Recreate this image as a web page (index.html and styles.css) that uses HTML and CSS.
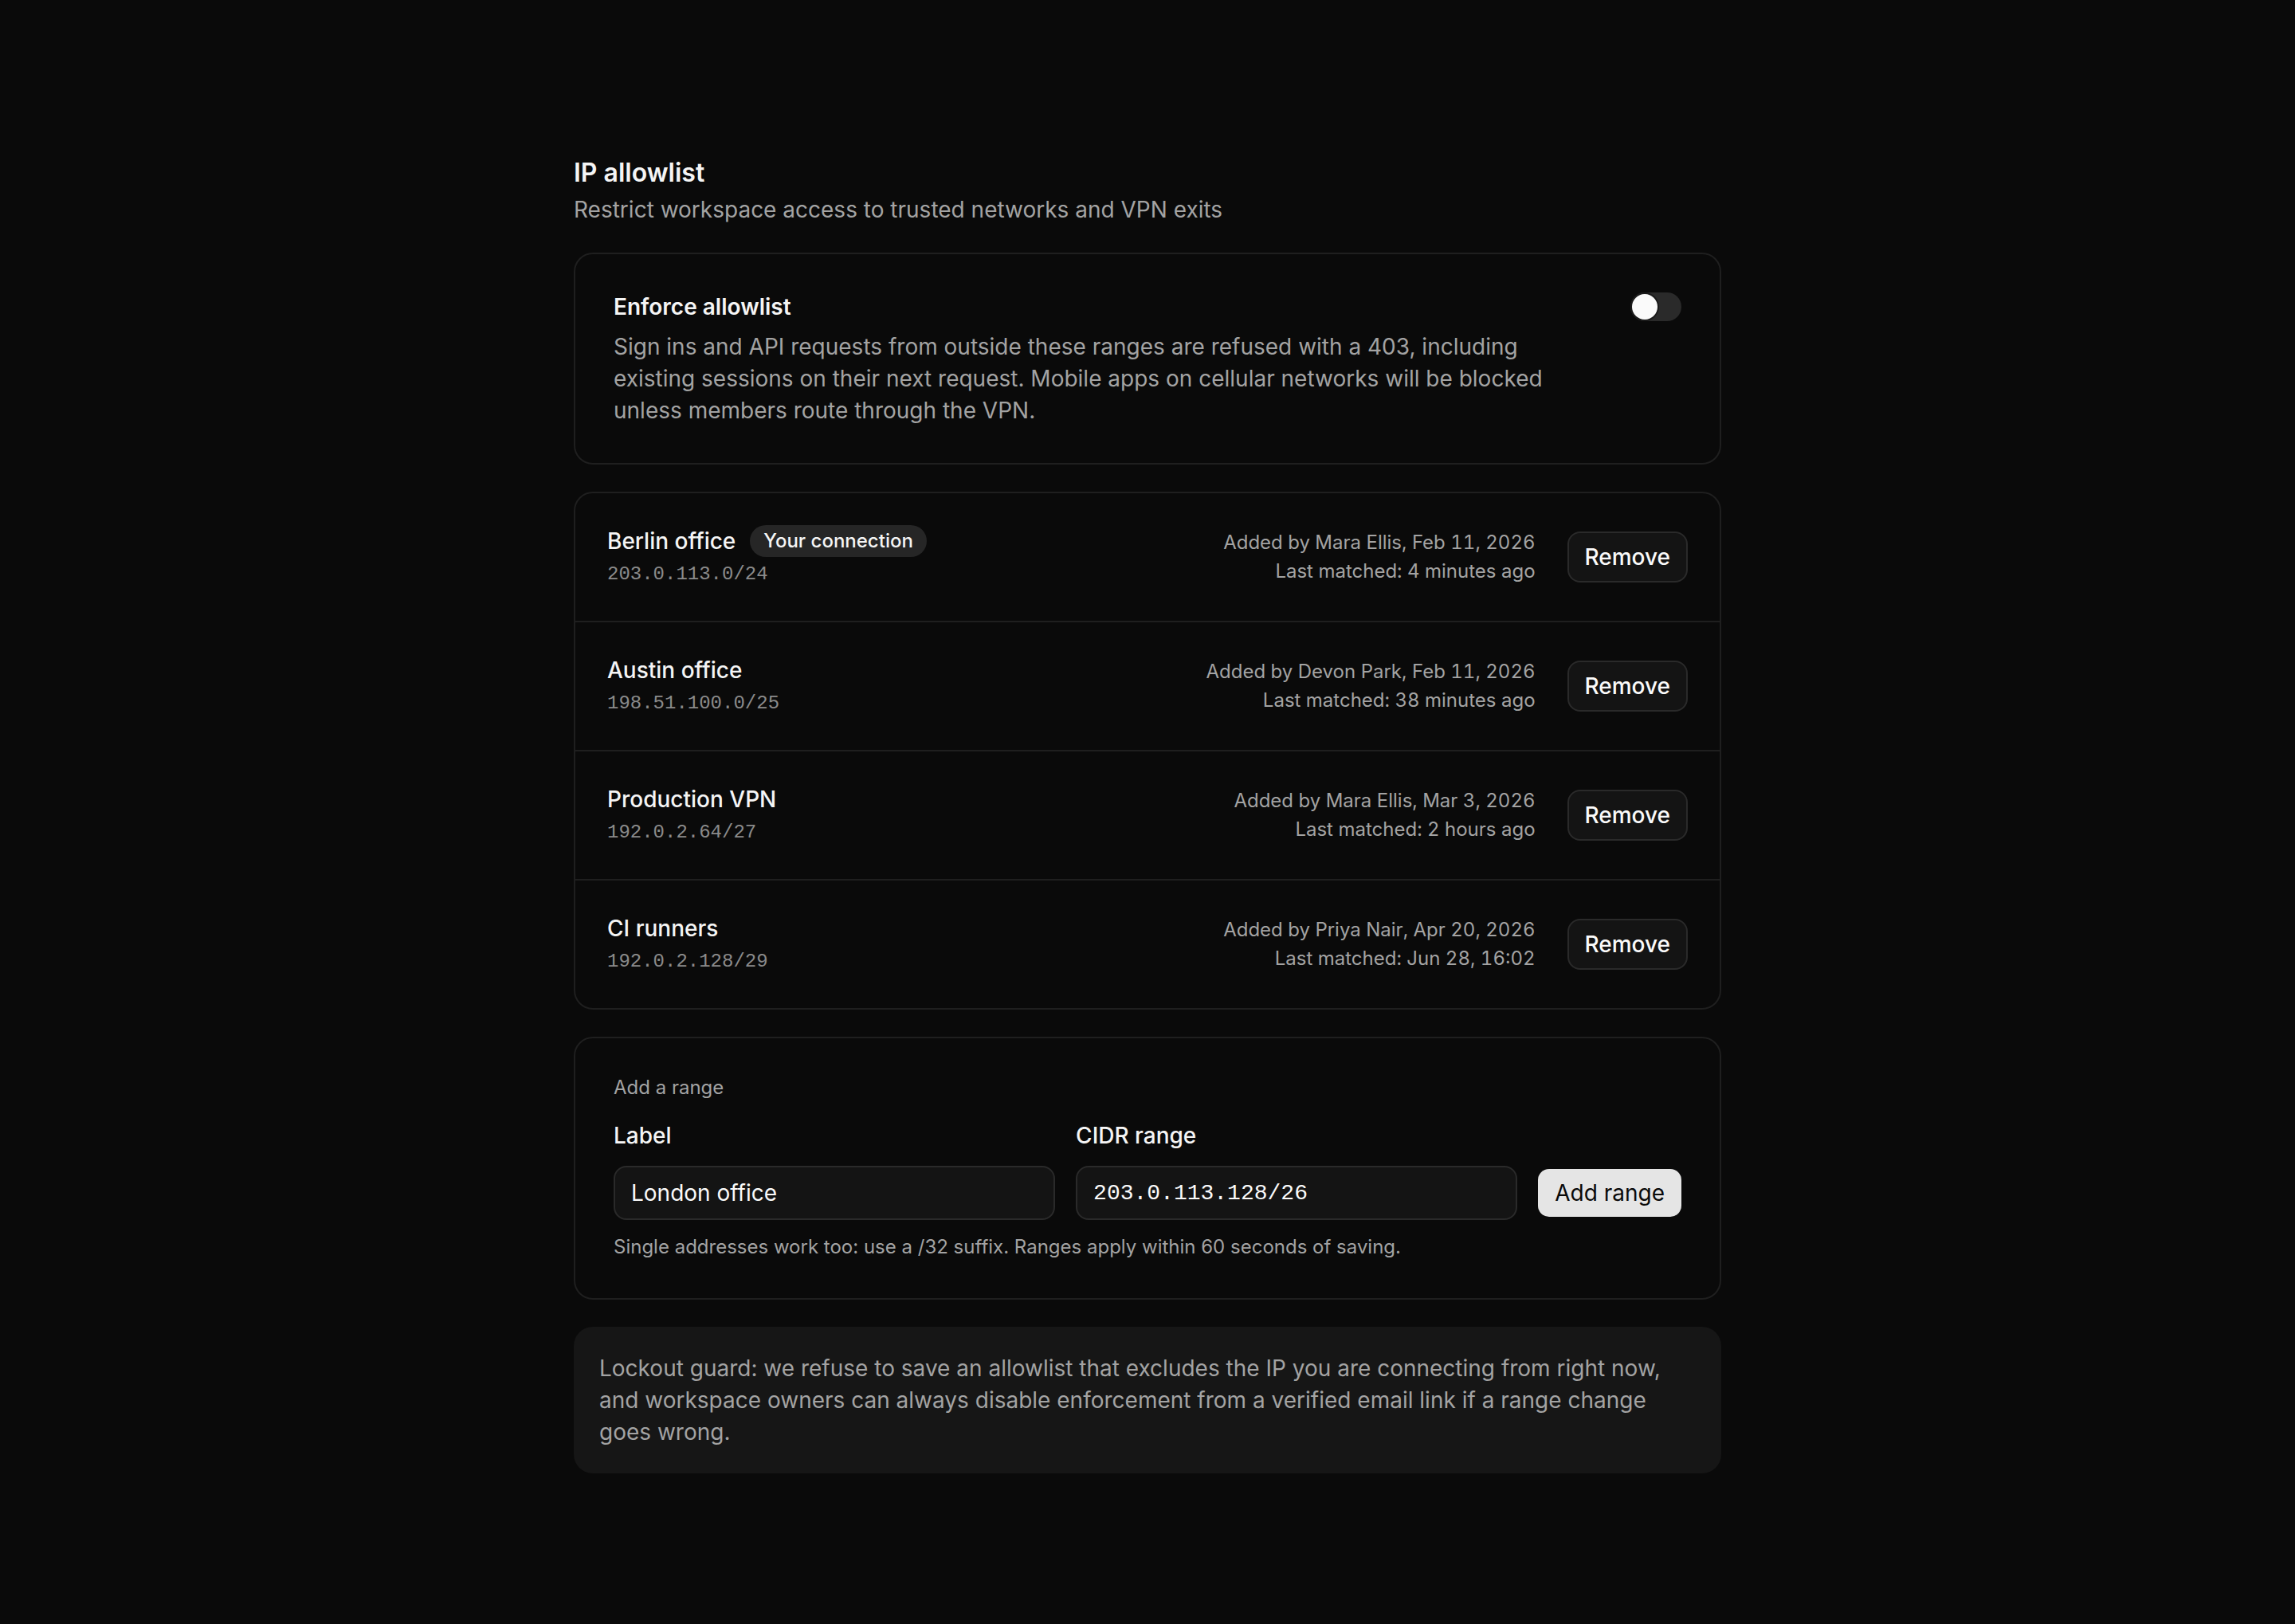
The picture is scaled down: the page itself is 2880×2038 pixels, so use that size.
FILE: index.html
```
<!DOCTYPE html>
<html lang="en">
<head>
	<meta charset="UTF-8">
	<meta name="viewport" content="width=device-width,initial-scale=1">
	<title>IP allowlist</title>

	<link rel="stylesheet" href="styles.css">
</head>
<body>
	<main class="page">
		<header class="head">
			<h1>IP allowlist</h1>
			<p>Restrict workspace access to trusted networks and VPN exits</p>
		</header>

		<section class="card enforce">
			<div class="enforce-text">
				<h2>Enforce allowlist</h2>
				<p>Sign ins and API requests from outside these ranges are refused with a 403, including existing sessions on their next request. Mobile apps on cellular networks will be blocked unless members route through the VPN.</p>
			</div>
			<button class="switch" type="button" role="switch" aria-checked="false" aria-label="Enforce allowlist"><span class="knob"></span></button>
		</section>

		<ul class="card ranges">
			<li class="range">
				<div class="range-main">
					<div class="range-name">Berlin office <span class="badge">Your connection</span></div>
					<code class="cidr">203.0.113.0/24</code>
				</div>
				<div class="range-meta">
					<span>Added by Mara Ellis, Feb 11, 2026</span>
					<span>Last matched: 4 minutes ago</span>
				</div>
				<button class="btn" type="button">Remove</button>
			</li>
			<li class="range">
				<div class="range-main">
					<div class="range-name">Austin office</div>
					<code class="cidr">198.51.100.0/25</code>
				</div>
				<div class="range-meta">
					<span>Added by Devon Park, Feb 11, 2026</span>
					<span>Last matched: 38 minutes ago</span>
				</div>
				<button class="btn" type="button">Remove</button>
			</li>
			<li class="range">
				<div class="range-main">
					<div class="range-name">Production VPN</div>
					<code class="cidr">192.0.2.64/27</code>
				</div>
				<div class="range-meta">
					<span>Added by Mara Ellis, Mar 3, 2026</span>
					<span>Last matched: 2 hours ago</span>
				</div>
				<button class="btn" type="button">Remove</button>
			</li>
			<li class="range">
				<div class="range-main">
					<div class="range-name">CI runners</div>
					<code class="cidr">192.0.2.128/29</code>
				</div>
				<div class="range-meta">
					<span>Added by Priya Nair, Apr 20, 2026</span>
					<span>Last matched: Jun 28, 16:02</span>
				</div>
				<button class="btn" type="button">Remove</button>
			</li>
		</ul>

		<form class="card add" onsubmit="return false">
			<p class="add-title">Add a range</p>
			<div class="add-grid">
				<label class="field-label" for="range-label">Label</label>
				<label class="field-label" for="range-cidr">CIDR range</label>
				<input class="input" id="range-label" type="text" value="London office">
				<input class="input mono" id="range-cidr" type="text" value="203.0.113.128/26">
				<button class="btn-primary" type="submit">Add range</button>
			</div>
			<p class="hint">Single addresses work too: use a /32 suffix. Ranges apply within 60 seconds of saving.</p>
		</form>

		<p class="note">Lockout guard: we refuse to save an allowlist that excludes the IP you are connecting from right now, and workspace owners can always disable enforcement from a verified email link if a range change goes wrong.</p>
	</main>
</body>
</html>
```

FILE: styles.css
```
html, body {
	margin: 0;
	background: #0a0a0a;
	color: #f5f5f5;
	font-family: Inter, 'Noto Sans', sans-serif;
}

h1, h2, p, ul {
	margin: 0;
	padding: 0;
}

.page {
	display: flex;
	flex-direction: column;
	gap: 34px;

	width: 1440px;
	margin: 0 auto;
	padding: 197px 0 160px;
}

/* header */

.head h1 {
	font-size: 32px;
	line-height: 40px;
	font-weight: 600;
}

.head p {
	margin-top: 6px;

	font-size: 28px;
	line-height: 40px;
	color: #a3a3a3;
}

/* cards */

.card {
	box-sizing: border-box;

	border: 2px solid #1f1f1f;
	border-radius: 24px;
}

.enforce {
	display: flex;
	align-items: flex-start;
	gap: 48px;

	padding: 48px 48px 46px;
}

.enforce-text {
	flex: 1;
}

.enforce h2 {
	font-size: 28px;
	line-height: 36px;
	font-weight: 600;
}

.enforce p {
	margin-top: 12px;

	font-size: 28px;
	line-height: 40px;
	color: #a3a3a3;
}

.switch {
	position: relative;
	flex: none;

	width: 64px;
	height: 36px;
	padding: 0;

	border: 0;
	border-radius: 18px;
	background: #2a2a2a;
}

.knob {
	position: absolute;
	top: 2px;
	left: 2px;

	width: 32px;
	height: 32px;

	border-radius: 50%;
	background: #fafafa;
	box-shadow: 0 0 0 2px #1a1a1a;
}

/* range list */

.ranges {
	list-style: none;
}

.range {
	display: flex;
	align-items: center;
	gap: 40px;

	padding: 40px;
}

.range + .range {
	border-top: 2px solid #1f1f1f;
}

.range-main {
	flex: 1;
}

.range-name {
	display: flex;
	align-items: center;
	gap: 18px;

	font-size: 28px;
	line-height: 40px;
	font-weight: 500;
}

.badge {
	padding: 4px 17px;

	border-radius: 999px;
	background: #262626;

	font-size: 24px;
	line-height: 32px;
	font-weight: 500;
}

.cidr {
	display: block;
	margin-top: 4px;

	font-family: 'Liberation Mono', monospace;
	font-size: 24px;
	line-height: 36px;
	color: #8a8a8a;
}

.range-meta {
	display: flex;
	flex-direction: column;

	font-size: 24px;
	line-height: 36px;
	font-variant-numeric: tabular-nums;
	color: #a3a3a3;
	text-align: right;
}

.btn {
	padding: 10px 20px;

	border: 2px solid #2a2a2a;
	border-radius: 16px;
	background: #141414;
	color: #fafafa;

	font: 500 28px/40px Inter, 'Noto Sans', sans-serif;
}

/* add form */

.add {
	padding: 48px;
}

.add-title {
	font-size: 24px;
	line-height: 28px;
	color: #a3a3a3;
}

.add-grid {
	display: grid;
	grid-template-columns: 1fr 1fr auto;
	column-gap: 26px;
	row-gap: 18px;

	margin-top: 26px;
}

.field-label {
	font-size: 28px;
	line-height: 40px;
	font-weight: 500;
}

.input {
	box-sizing: border-box;
	grid-row: 2;

	width: 100%;
	height: 68px;
	padding: 0 20px;

	border: 2px solid #2a2a2a;
	border-radius: 16px;
	background: #141414;
	color: #fafafa;

	font: 400 28px Inter, 'Noto Sans', sans-serif;
}

.input.mono {
	font-family: 'Liberation Mono', monospace;
}

.btn-primary {
	grid-row: 2;
	align-self: center;

	padding: 10px 21px;

	border: 0;
	border-radius: 14px;
	background: #e5e5e5;
	color: #0a0a0a;

	font: 400 28px/40px Inter, 'Noto Sans', sans-serif;
}

.hint {
	margin-top: 18px;

	font-size: 24px;
	line-height: 32px;
	color: #a3a3a3;
}

/* lockout note */

.note {
	padding: 32px;

	border-radius: 24px;
	background: #161616;

	font-size: 28px;
	line-height: 40px;
	color: #a3a3a3;
}
```
